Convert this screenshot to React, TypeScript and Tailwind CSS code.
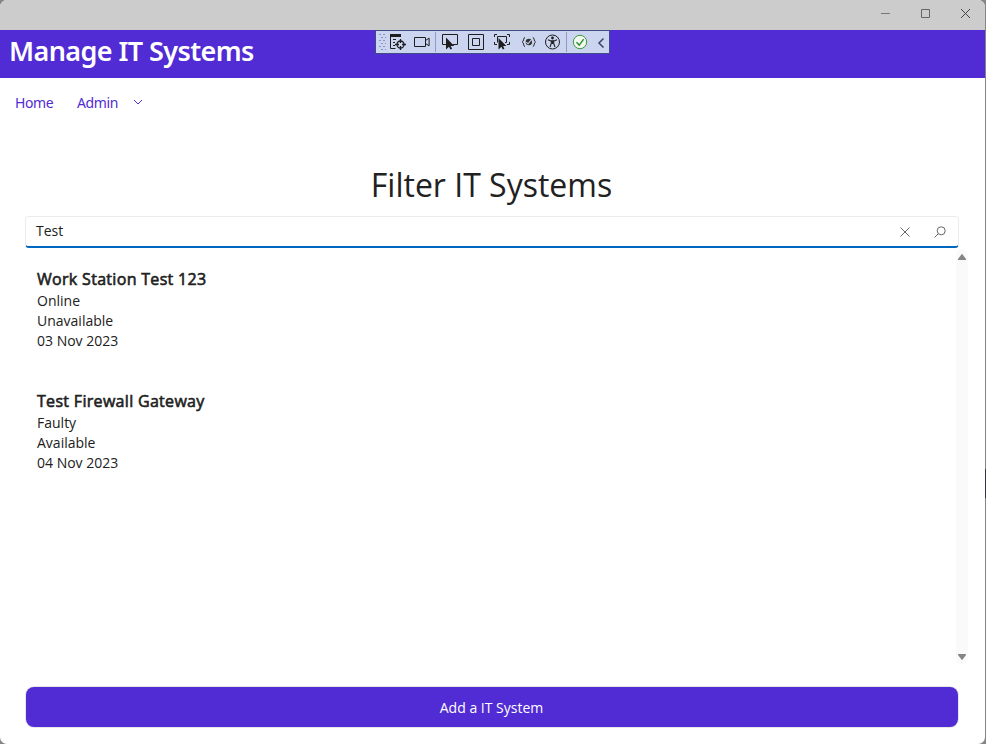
import type { ReactNode } from 'react';

type SystemItem = { name: string; status: string; availability: string; date: string };

const systems: SystemItem[] = [
  { name: 'Work Station Test 123', status: 'Online', availability: 'Unavailable', date: '03 Nov 2023' },
  { name: 'Test Firewall Gateway', status: 'Faulty', availability: 'Available', date: '04 Nov 2023' },
];

function Icon({ children, w = 18, h = 18 }: { children: ReactNode; w?: number; h?: number }) {
  return (
    <svg width={w} height={h} viewBox={`0 0 ${w} ${h}`} fill="none" stroke="#1e1e1e" className="block shrink-0">
      {children}
    </svg>
  );
}

function Cell({ className, children }: { className: string; children?: ReactNode }) {
  return <div className={`flex h-full shrink-0 items-center justify-center ${className}`}>{children}</div>;
}

function DebugToolbar() {
  return (
    <div className="absolute left-[375px] top-0 flex h-[24px] w-[235px] items-center border border-[#3f4a86] bg-[#ccd5f0]">
      <Cell className="w-[12px]">
        <Icon w={8} h={18}>
          <path
            d="M1 1.5h2M5 1.5h2M3 4.5h2M7 4.5h1M1 7.5h2M5 7.5h2M3 10.5h2M7 10.5h1M1 13.5h2M5 13.5h2M3 16.5h2M7 16.5h1"
            stroke="#8794be"
          />
        </Icon>
      </Cell>
      <Cell className="w-[20px]">
        <Icon>
          <path d="M1 1h11v3H1z" fill="#1e1e1e" stroke="none" />
          <path d="M1.5 4v11.5h5M4 6.5h3M4 9.5h2M4 12.5h2" />
          <circle cx="11.5" cy="11.5" r="3.5" strokeWidth="1.3" />
          <path d="M11.5 6v4M11.5 13v4M6 11.5h4M13 11.5h4" strokeWidth="1.3" />
        </Icon>
      </Cell>
      <Cell className="w-[27px]">
        <Icon>
          <path d="M1.5 4.5h11v9h-11z" />
          <path d="M12.5 7.5l3.6-2.3v7.6l-3.6-2.3" />
        </Icon>
      </Cell>
      <div className="h-5 w-px shrink-0 bg-[#8e9bc5]" />
      <Cell className="w-[28px]">
        <Icon>
          <path d="M5 11.5H1.5v-10h15v10H12" />
          <path d="M5 4.5v12l3-2.7 1.4 2.7 1.7-.8-1.4-2.8h3.6z" fill="#1e1e1e" stroke="none" />
        </Icon>
      </Cell>
      <Cell className="w-[24px]">
        <Icon>
          <path d="M1.5 1.5h15v15h-15zM5.5 5.5h7v7h-7z" />
        </Icon>
      </Cell>
      <Cell className="w-[28px]">
        <Icon>
          <path d="M4.5 9.5v-6h9v6H12M1.5 4V1.5H4M14 1.5h2.5V4M1.5 9v2.5H4M14 11.5h2.5V9" />
          <path d="M5.5 5v11.5l3-2.7 1.3 2.7 1.6-.8-1.3-2.7h3.3z" fill="#1e1e1e" stroke="none" />
        </Icon>
      </Cell>
      <Cell className="w-[25px]">
        <Icon>
          <path d="M5 4.5C3 4.5 4.2 8.5 2.2 9c2 .5.8 4.5 2.8 4.5M12.8 4.5c2 0 .8 4 2.8 4.5-2 .5-.8 4.5-2.8 4.5" />
          <circle cx="8.9" cy="9" r="3.2" fill="#333" stroke="none" />
          <path d="M6.3 9.2l1.7 1.6L11.8 6.4" stroke="#ccd5f0" strokeWidth="1.1" />
        </Icon>
      </Cell>
      <Cell className="w-[23px]">
        <Icon>
          <circle cx="8.5" cy="9" r="7" />
          <circle cx="8.5" cy="5" r="1.4" fill="#1e1e1e" stroke="none" />
          <path d="M4 6.7l3 1.2h3l3-1.2M7.3 8v2.5L6 14M9.7 8v2.5L11 14M8.5 8v3" strokeWidth="1.1" />
        </Icon>
      </Cell>
      <Cell className="w-[2px]" />
      <div className="h-5 w-px shrink-0 bg-[#8e9bc5]" />
      <Cell className="w-[26px]">
        <Icon>
          <circle cx="9" cy="9" r="6.7" fill="#f2f7f0" stroke="#369b37" />
          <path d="M5.5 9.2l2.7 2.9 4.5-6" stroke="#2f932f" strokeWidth="1.5" />
        </Icon>
      </Cell>
      <Cell className="w-[15px]">
        <Icon w={8} h={12}>
          <path d="M6.5 2.5L2 7l4.5 4.5" stroke="#3b4468" strokeWidth="1.5" />
        </Icon>
      </Cell>
    </div>
  );
}

function TitleBar() {
  return (
    <div className="flex h-[30px] justify-end bg-[#cccccc]">
      <div className="-mr-px flex h-[27px] items-center">
        <Cell className="w-10"><svg width="10" height="10" className="block" stroke="#777"><path d="M0 4.5h9" /></svg></Cell>
        <Cell className="w-10"><svg width="10" height="10" className="block" fill="none" stroke="#666"><path d="M.5 .5h8v8h-8z" /></svg></Cell>
        <Cell className="w-10"><svg width="10" height="10" className="block" stroke="#444"><path d="M0 0l9 9M9 0l-9 9" /></svg></Cell>
      </div>
    </div>
  );
}

function SystemCard({ item }: { item: SystemItem }) {
  return (
    <li className="h-[122px] text-[14px] leading-5">
      <h2 className="h-[23px] text-[16px] leading-[22px] whitespace-nowrap [-webkit-text-stroke:0.6px_#212121] tracking-[0.31px]">{item.name}</h2>
      <p>{item.status}</p>
      <p>{item.availability}</p>
      <p>{item.date}</p>
    </li>
  );
}

export default function App() {
  return (
    <div className="h-[744px] w-[986px] overflow-hidden bg-[#858585] font-['Open_Sans',sans-serif] text-[#212121]">
      <div className="flex h-full w-[985px] flex-col overflow-hidden rounded-[7px] bg-white">
        <TitleBar />
        <header className="relative h-12 shrink-0 bg-[#512bd4] pl-[9px]">
          <h1 className="text-[27px] leading-[41px] font-semibold text-white font-['Noto_Sans',sans-serif] tracking-[-0.6px] whitespace-nowrap">
            Manage IT Systems
          </h1>
          <DebugToolbar />
        </header>
        <nav className="flex h-[50px] shrink-0 items-center pl-[15px] text-[14px] text-[#512bd4] font-['Noto_Sans',sans-serif]">
          <span className="mb-[2px] w-[62px] tracking-[-0.4px]">Home</span>
          <span className="mb-[2px] w-[56px] tracking-[-0.4px]">Admin</span>
          <svg width="10" height="8" className="mb-[2px] block" fill="none" stroke="#512bd4"><path d="M1 2l4 4 4-4" /></svg>
        </nav>
        <main className="flex flex-1 flex-col px-[26px]">
          <h2 className="mt-[35px] mr-[2px] h-[53px] text-center text-[32px] leading-[44px] whitespace-nowrap">Filter IT Systems</h2>
          <div className="-mx-px flex h-8 w-[934px] items-center rounded-[4px] border border-[#ececec] border-b-2 border-b-[#0067c0] pl-[10px]">
            <span className="mb-[2px] flex-1 text-[14px] leading-5">Test</span>
            <svg width="10" height="10" className="mr-[24px] block" stroke="#666"><path d="M.5 .5l9 9M9.5 .5l-9 9" /></svg>
            <svg width="12" height="12" className="mr-[12px] block" fill="none" stroke="#666"><circle cx="7.2" cy="4.8" r="4" /><path d="M4.3 7.7L.5 11.5" /></svg>
          </div>
          <div className="-mr-[9px] flex h-[416px] justify-between">
            <ul className="pt-5 pl-[11px]">
              {systems.map((item) => <SystemCard key={item.name} item={item} />)}
            </ul>
            <div className="mt-[1px] flex w-3 flex-col items-center justify-between rounded-[6px] bg-[#fafafa] pt-1 pb-[3px]">
              <svg width="10" height="8" className="block" fill="#858585"><path d="M5 .7l4 5.3q.4 1-.6 1H1.6q-1 0-.6-1z" /></svg>
              <svg width="10" height="8" className="block" fill="#858585"><path d="M5 7.3l4-5.3q.4-1-.6-1H1.6q-1 0-.6 1z" /></svg>
            </div>
          </div>
          <button className="mt-[23px] h-10 w-[932px] rounded-[8px] bg-[#512bd4] pr-px text-[14px] text-white shadow-[0_0_0_1px_#e5e5ea]">
            Add a IT System
          </button>
        </main>
      </div>
      <div className="absolute left-[985px] top-[469px] h-[29px] w-px bg-[#33334d]" />
    </div>
  );
}
